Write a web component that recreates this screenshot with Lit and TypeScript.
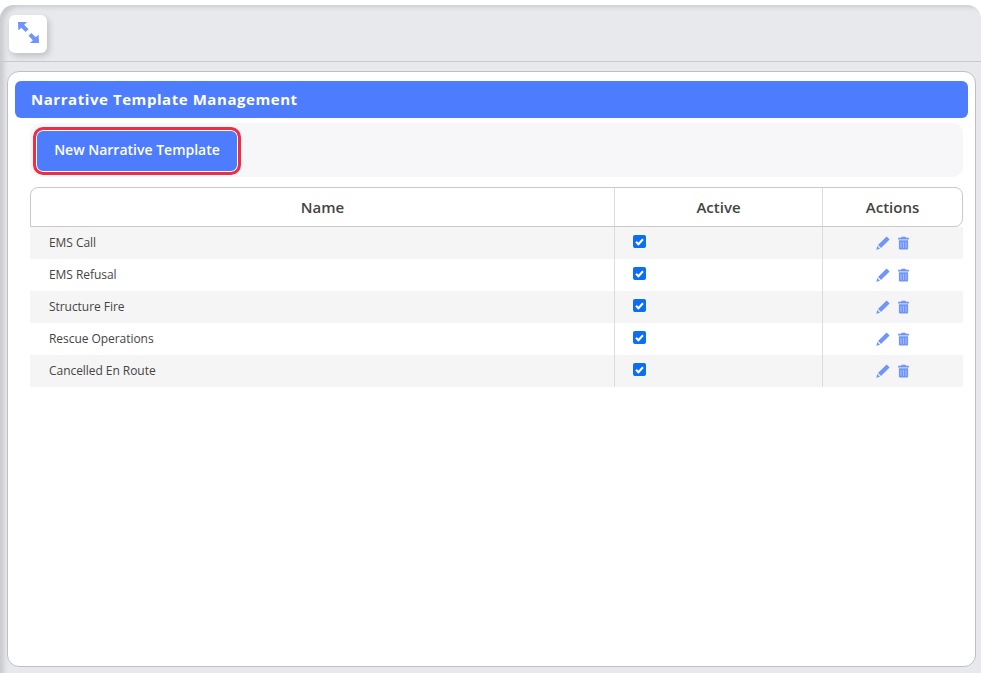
import { html, css, LitElement } from 'lit';
import { customElement } from 'lit/decorators.js';

const TEMPLATES = ['EMS Call', 'EMS Refusal', 'Structure Fire', 'Rescue Operations', 'Cancelled En Route'];

@customElement('app-root')
export class AppRoot extends LitElement {
  static styles = css`
    :host {
      display: block;
      height: 673px;
      overflow: hidden;
      background: #fff;
      font-family: 'Open Sans', sans-serif;
      color: #444;
    }

    .shell {
      box-sizing: border-box;
      height: 678px;
      margin-top: 5px;
      background: #e8e9ed;
      border-radius: 14px 14px 0 0;
      box-shadow: inset 6px 4px 5px -2px #c9cacd;
    }

    .topbar {
      box-sizing: border-box;
      height: 57px;
      padding: 10px 0 0 9px;
      border-bottom: 1px solid #c9c9cb;
    }

    .expand {
      width: 38px;
      height: 38px;
      display: flex;
      align-items: center;
      justify-content: center;
      background: #fff;
      border-radius: 6px;
      box-shadow: 2px 3px 6px rgba(0, 0, 0, 0.18);
    }

    .expand svg {
      display: block;
      margin: -3px 0 0 1px;
    }

    .card {
      box-sizing: border-box;
      height: 596px;
      margin: 9px 5px 0 7px;
      padding: 9px 7px;
      background: #fff;
      border: 1px solid #bfbfc1;
      border-radius: 12px;
    }

    .title {
      height: 37px;
      padding: 0 0 2px 16px;
      box-sizing: border-box;
      display: flex;
      align-items: center;
      background: #4d7cfe;
      border-radius: 6px;
      color: #fff;
      font-size: 15px;
      font-weight: 700;
      letter-spacing: 0.56px;
    }

    .toolbar {
      box-sizing: border-box;
      height: 54px;
      margin: 5px 5px 0 15px;
      padding: 4px 3px;
      background: #f7f7f9;
      border-radius: 10px;
    }

    .new-btn {
      box-sizing: border-box;
      display: block;
      width: 208px;
      height: 48px;
      padding: 0 0 3px;
      background: #4d7cfe;
      border: 3px solid #f02d42;
      border-radius: 10px;
      box-shadow: inset 0 0 0 1px #fff;
      color: #fff;
      font-family: inherit;
      font-size: 14px;
      font-weight: 600;
    }

    .table {
      margin: 10px 5px 0 15px;
    }

    .row,
    .head {
      display: grid;
    }

    .head {
      grid-template-columns: 583px 208px 1fr;
      box-sizing: border-box;
      height: 40px;
      background: #fff;
      border: 1px solid #c9c9cb;
      border-radius: 8px 8px 8px 0;
      font-size: 15px;
      font-weight: 600;
      text-align: center;
    }

    .head > div {
      display: flex;
      align-items: center;
      justify-content: center;
    }

    .head > div + div,
    .row > div + div {
      border-left: 1px solid #dcdcdc;
    }

    .row {
      grid-template-columns: 584px 208px 1fr;
      height: 32px;
      font-size: 12px;
      letter-spacing: -0.05px;
    }

    .row:nth-child(odd) {
      background: #f5f5f5;
    }

    .name {
      padding-left: 19px;
      line-height: 32px;
    }

    .active {
      padding: 8px 0 0 18px;
    }

    .box {
      width: 13px;
      height: 13px;
      display: block;
      background: #0b6ff0;
      border-radius: 2px;
    }

    .actions {
      display: flex;
      justify-content: center;
      align-items: flex-start;
      gap: 7px;
      padding-top: 9px;
    }

    .actions svg {
      display: block;
    }
  `;

  private renderRow(name: string) {
    return html`
      <div class="row">
        <div class="name">${name}</div>
        <div class="active">
          <svg class="box" viewBox="0 0 13 13">
            <path d="M3 6.800l2.400 2.400L10 4.200" fill="none" stroke="#fff" stroke-width="2" />
          </svg>
        </div>
        <div class="actions">
          <svg width="14" height="14" viewBox="0 0 14 14">
            <path d="M10.600.4l3 3L5 12 2 9z" fill="#6f95fb" />
            <path d="M1.300 10l2.700 2.700-3.700 1z" fill="#6f95fb" />
          </svg>
          <svg width="13" height="14" viewBox="0 0 13 14">
            <path d="M4.600.8h3.800l.5 1h3v1.600H1.100V1.800h3z" fill="#6f95fb" />
            <path d="M1.900 4.200h9.200v8.100a1.300 1.300 0 0 1-1.300 1.300H3.200a1.300 1.300 0 0 1-1.300-1.300z" fill="#6f95fb" />
            <path d="M4 6v5.800M6.500 6v5.800M9 6v5.800" stroke="#a9bffc" stroke-width="1" />
          </svg>
        </div>
      </div>
    `;
  }

  render() {
    return html`
      <div class="shell">
        <div class="topbar">
          <div class="expand">
            <svg width="23" height="23" viewBox="0 0 24 24" fill="#6f95fb">
              <path d="M1 1h9.500L7.500 4 12 8.500 9 11.500 4.500 7 1.500 10z" />
              <path d="M23 23h-9.500l3-3L12 15.500l3-3 4.500 4.500 3-3z" />
            </svg>
          </div>
        </div>
        <div class="card">
          <div class="title">Narrative Template Management</div>
          <div class="toolbar">
            <button class="new-btn">New Narrative Template</button>
          </div>
          <div class="table">
            <div class="head">
              <div>Name</div>
              <div>Active</div>
              <div>Actions</div>
            </div>
            <div>
              ${TEMPLATES.map(t => this.renderRow(t))}
            </div>
          </div>
        </div>
      </div>
    `;
  }
}
